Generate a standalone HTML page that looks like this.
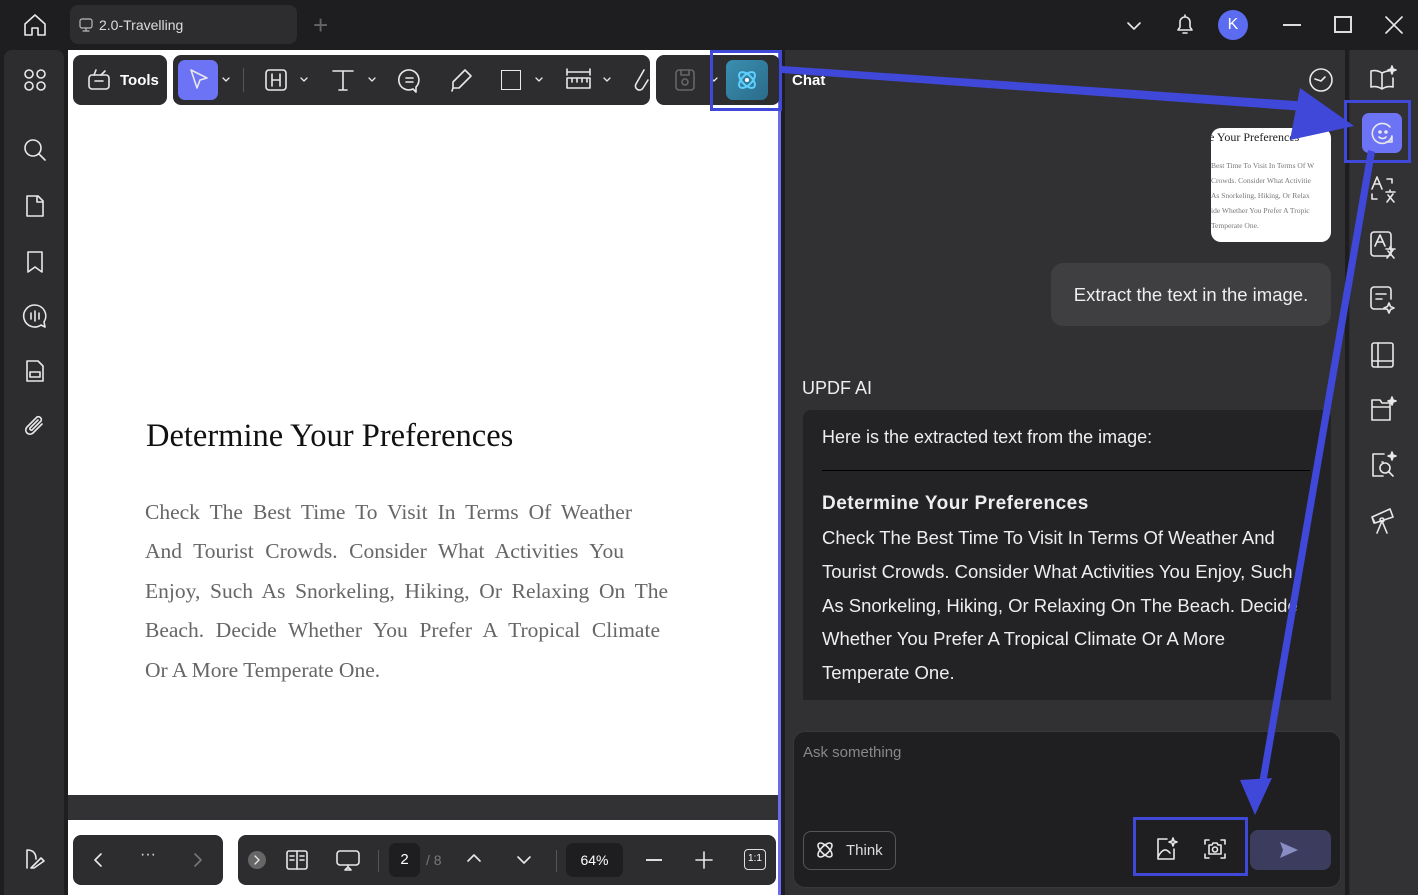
<!DOCTYPE html>
<html><head><meta charset="utf-8"><style>
*{box-sizing:border-box;margin:0;padding:0}
body{width:1418px;height:895px;background:#1e1e20;font-family:"Liberation Sans",sans-serif;position:relative;overflow:hidden;color:#fff}
.abs{position:absolute}
.ic{position:absolute;fill:none;stroke:#e8e8e8;stroke-width:1.6;stroke-linecap:round;stroke-linejoin:round}
.grp{position:absolute;background:#2d2d30;border-radius:8px}
.serif{font-family:"Liberation Serif",serif}
.pl{position:absolute;left:145px;font-size:21.5px;color:#666;white-space:nowrap;text-align:justify;text-align-last:justify;font-family:"Liberation Serif",serif;height:30px;line-height:30px}
</style></head><body>
<!-- title bar -->
<svg class="ic" style="left:22px;top:12px" width="26" height="26" viewBox="0 0 26 26"><path d="M3 12L13 3l10 9v11H16v-7h-6v7H3z"/></svg>
<div class="abs" style="left:70px;top:5px;width:227px;height:39px;background:#2d2d30;border-radius:8px"></div>
<svg class="ic" style="left:79px;top:18px;stroke:#bbb;stroke-width:1.2" width="14" height="14" viewBox="0 0 14 14"><rect x="1" y="1" width="12" height="9" rx="2"/><path d="M7 10v3M4 13h6"/></svg>
<div class="abs" style="left:99px;top:17px;font-size:14px;color:#ddd">2.0-Travelling</div>
<div class="abs" style="left:313px;top:10px;font-size:26px;color:#666;font-weight:300">+</div>
<svg class="ic" style="left:1124px;top:16px" width="20" height="20" viewBox="0 0 20 20"><path d="M4 7l6 6 6-6"/></svg>
<svg class="ic" style="left:1172px;top:12px" width="26" height="26" viewBox="0 0 26 26"><path d="M6 18h14l-2-3v-5a5 5 0 0 0-10 0v5zM11 21h4M13 3v2"/></svg>
<div class="abs" style="left:1218px;top:10px;width:30px;height:30px;border-radius:50%;background:#5b6cf0;text-align:center;line-height:30px;font-size:16px">K</div>
<div class="abs" style="left:1283px;top:24px;width:18px;height:2px;background:#ddd"></div>
<div class="abs" style="left:1334px;top:16px;width:18px;height:17px;border:2px solid #ddd"></div>
<svg class="ic" style="left:1384px;top:15px" width="20" height="20" viewBox="0 0 20 20"><path d="M2 2l16 16M18 2L2 18"/></svg>

<!-- left sidebar -->
<div class="abs" style="left:4px;top:50px;width:60px;height:845px;background:#2d2d30;border-radius:8px 8px 0 0"></div>
<svg class="ic" style="left:22px;top:67px" width="26" height="26" viewBox="0 0 26 26"><circle cx="7" cy="7" r="4"/><circle cx="19" cy="7" r="4"/><circle cx="7" cy="19" r="4"/><circle cx="19" cy="19" r="4"/></svg>
<svg class="ic" style="left:22px;top:137px" width="26" height="26" viewBox="0 0 26 26"><circle cx="11" cy="11" r="8"/><path d="M17 17l6 6"/></svg>
<svg class="ic" style="left:22px;top:193px" width="26" height="26" viewBox="0 0 26 26"><path d="M5 3h11l5 5v15H5zM15 3v6h6"/></svg>
<svg class="ic" style="left:22px;top:249px" width="26" height="26" viewBox="0 0 26 26"><path d="M6 3h14v20l-7-5-7 5z"/></svg>
<svg class="ic" style="left:21px;top:302px" width="28" height="28" viewBox="0 0 28 28"><path d="M14 3a11 11 0 1 0 6 20l4 2-1-5A11 11 0 0 0 14 3zM10 11v6M14 9v10M18 11v6"/></svg>
<svg class="ic" style="left:22px;top:358px" width="26" height="26" viewBox="0 0 26 26"><path d="M5 3h11l5 5v15H5zM8 14h10v5H8z"/></svg>
<svg class="ic" style="left:22px;top:413px" width="26" height="26" viewBox="0 0 26 26"><path d="M20 11l-9 9a4 4 0 0 1-6-6l10-10a3 3 0 0 1 4 4l-9 9a1.5 1.5 0 0 1-2-2l8-8"/></svg>
<svg class="ic" style="left:22px;top:846px" width="26" height="26" viewBox="0 0 26 26"><path d="M5 4v18M5 4c6 0 9 3 9 9M9 22l10-10 3 3-10 7z"/></svg>

<!-- document -->
<div class="abs" style="left:68px;top:50px;width:712px;height:745px;background:#fff"></div>
<div class="abs" style="left:68px;top:795px;width:712px;height:25px;background:#323235"></div>
<div class="abs" style="left:68px;top:820px;width:712px;height:75px;background:#fff"></div>
<div class="abs" style="left:778px;top:50px;width:3px;height:845px;background:#6a6cf0"></div>
<div class="abs serif" style="left:146px;top:418px;font-size:32.5px;color:#111">Determine Your Preferences</div>
<div class="pl" style="top:497px;width:487px">Check The Best Time To Visit In Terms Of Weather</div>
<div class="pl" style="top:536px;width:479px">And Tourist Crowds. Consider What Activities You</div>
<div class="pl" style="top:576px;width:523px">Enjoy, Such As Snorkeling, Hiking, Or Relaxing On The</div>
<div class="pl" style="top:615px;width:515px">Beach. Decide Whether You Prefer A Tropical Climate</div>
<div class="pl" style="top:655px;text-align-last:left">Or A More Temperate One.</div>

<!-- toolbar -->
<div class="grp" style="left:73px;top:55px;width:94px;height:50px"></div>
<svg class="ic" style="left:86px;top:66px" width="26" height="26" viewBox="0 0 26 26"><rect x="3" y="9" width="20" height="14" rx="3"/><path d="M9 15h8M8 9l2-5M15 9l4-4"/></svg>
<div class="abs" style="left:120px;top:72px;font-size:15px;font-weight:bold">Tools</div>
<div class="grp" style="left:173px;top:55px;width:477px;height:50px"></div>
<div class="abs" style="left:178px;top:60px;width:40px;height:40px;background:#6d73f5;border-radius:7px"></div>
<svg class="ic" style="left:186px;top:67px" width="26" height="26" viewBox="0 0 26 26"><path d="M5 3l16 8-7 2-3 8z"/></svg>
<svg class="ic" style="left:220px;top:73px;stroke-width:1.3" width="12" height="12" viewBox="0 0 12 12"><path d="M3 5l3 3 3-3"/></svg>
<div class="abs" style="left:243px;top:68px;width:1px;height:24px;background:#555"></div>
<svg class="ic" style="left:263px;top:67px" width="26" height="26" viewBox="0 0 26 26"><rect x="3" y="3" width="20" height="20" rx="3"/><path d="M9 7v12M17 7v12M9 13h8"/></svg>
<svg class="ic" style="left:298px;top:73px;stroke-width:1.3" width="12" height="12" viewBox="0 0 12 12"><path d="M3 5l3 3 3-3"/></svg>
<svg class="ic" style="left:330px;top:67px" width="26" height="26" viewBox="0 0 26 26"><path d="M3 4h20M13 4v19M9 23h8"/></svg>
<svg class="ic" style="left:366px;top:73px;stroke-width:1.3" width="12" height="12" viewBox="0 0 12 12"><path d="M3 5l3 3 3-3"/></svg>
<svg class="ic" style="left:397px;top:67px" width="27" height="27" viewBox="0 0 27 27"><path d="M13 3a10 10 0 1 0 3 19l3 3v-5A10 10 0 0 0 13 3zM9 11h7M9 15h7"/></svg>
<svg class="ic" style="left:448px;top:67px" width="26" height="26" viewBox="0 0 26 26"><path d="M17 3l6 6-12 12H5v-6zM5 21l-1 3"/></svg>
<div class="abs" style="left:501px;top:70px;width:20px;height:20px;border:1.6px solid #e8e8e8"></div>
<svg class="ic" style="left:533px;top:73px;stroke-width:1.3" width="12" height="12" viewBox="0 0 12 12"><path d="M3 5l3 3 3-3"/></svg>
<svg class="ic" style="left:565px;top:66px" width="27" height="27" viewBox="0 0 27 27"><path d="M2 3v6M25 3v6M2 6h23M2 12h23v10H2zM7 12v4M12 12v4M17 12v4M22 12v4"/></svg>
<svg class="ic" style="left:601px;top:73px;stroke-width:1.3" width="12" height="12" viewBox="0 0 12 12"><path d="M3 5l3 3 3-3"/></svg>
<svg class="ic" style="left:632px;top:67px" width="18" height="28" viewBox="0 0 18 28"><path d="M12 3l-8 14a4 4 0 0 0 7 4l5-8"/></svg>
<div class="grp" style="left:656px;top:55px;width:124px;height:50px"></div>
<svg class="ic" style="left:673px;top:67px;stroke:#666" width="24" height="26" viewBox="0 0 24 26"><rect x="3" y="3" width="18" height="20" rx="3"/><circle cx="12" cy="15" r="3"/><path d="M8 3v5h8V3"/></svg>
<svg class="ic" style="left:708px;top:73px;stroke-width:1.3" width="12" height="12" viewBox="0 0 12 12"><path d="M3 5l3 3 3-3"/></svg>
<div class="abs" style="left:726px;top:60px;width:42px;height:40px;background:linear-gradient(135deg,#3a8fb0,#2b6b8a);border-radius:7px"></div>
<svg class="ic" style="left:733px;top:66px;stroke:#5dd0ff;stroke-width:2" width="28" height="28" viewBox="0 0 28 28"><ellipse cx="14" cy="14" rx="10" ry="5" transform="rotate(45 14 14)"/><ellipse cx="14" cy="14" rx="10" ry="5" transform="rotate(-45 14 14)"/><circle cx="14" cy="14" r="2" fill="#fff" stroke="none"/></svg>
<div class="abs" style="left:710px;top:50px;width:72px;height:61px;border:3px solid #3f48d8"></div>

<!-- bottom bars -->
<div class="grp" style="left:73px;top:835px;width:150px;height:50px"></div>
<svg class="ic" style="left:90px;top:851px" width="16" height="18" viewBox="0 0 16 18"><path d="M11 3L5 9l6 6"/></svg>
<div class="abs" style="left:140px;top:846px;font-size:16px;color:#ddd">···</div>
<svg class="ic" style="left:190px;top:851px;stroke:#777" width="16" height="18" viewBox="0 0 16 18"><path d="M5 3l6 6-6 6"/></svg>
<div class="grp" style="left:238px;top:835px;width:538px;height:50px"></div>
<div class="abs" style="left:248px;top:851px;width:18px;height:18px;border-radius:50%;background:#666"></div>
<svg class="ic" style="left:251px;top:854px;stroke-width:1.3" width="12" height="12" viewBox="0 0 12 12"><path d="M4 2l4 4-4 4"/></svg>
<svg class="ic" style="left:284px;top:847px" width="26" height="26" viewBox="0 0 26 26"><rect x="3" y="4" width="20" height="18" rx="2"/><path d="M13 4v18M6 9h4M6 13h4M16 9h4M16 13h4"/></svg>
<svg class="ic" style="left:335px;top:847px" width="26" height="26" viewBox="0 0 26 26"><rect x="2" y="4" width="22" height="14" rx="3"/><path d="M13 18v3M10 23h6l-3-3z"/></svg>
<div class="abs" style="left:378px;top:850px;width:1px;height:22px;background:#555"></div>
<div class="abs" style="left:389px;top:843px;width:31px;height:34px;background:#1e1e20;border-radius:7px;text-align:center;line-height:34px;font-size:15px">2</div>
<div class="abs" style="left:426px;top:852px;font-size:14px;color:#777">/ 8</div>
<svg class="ic" style="left:465px;top:851px" width="18" height="14" viewBox="0 0 18 14"><path d="M3 10l6-6 6 6"/></svg>
<svg class="ic" style="left:515px;top:853px" width="18" height="14" viewBox="0 0 18 14"><path d="M3 4l6 6 6-6"/></svg>
<div class="abs" style="left:556px;top:850px;width:1px;height:22px;background:#555"></div>
<div class="abs" style="left:566px;top:843px;width:57px;height:34px;background:#1e1e20;border-radius:7px;text-align:center;line-height:34px;font-size:14px">64%</div>
<div class="abs" style="left:646px;top:859px;width:16px;height:2px;background:#ddd"></div>
<svg class="ic" style="left:695px;top:851px" width="18" height="18" viewBox="0 0 18 18"><path d="M9 1v16M1 9h16"/></svg>
<div class="abs" style="left:744px;top:849px;width:22px;height:21px;border:1.5px solid #ddd;border-radius:4px;font-size:10px;text-align:center;line-height:18px">1:1</div>

<!-- chat panel -->
<div class="abs" style="left:785px;top:50px;width:560px;height:845px;background:#313134"></div>
<div class="abs" style="left:792px;top:72px;font-size:15px;font-weight:bold">Chat</div>
<svg class="ic" style="left:1307px;top:66px" width="28" height="28" viewBox="0 0 28 28"><circle cx="14" cy="14" r="11"/><path d="M8 13l6 2 4-4"/></svg>
<div class="abs" style="left:1211px;top:128px;width:120px;height:114px;background:#fff;border-radius:10px;overflow:hidden">
<div class="serif" style="position:absolute;left:-8px;top:2px;font-size:12px;color:#222;white-space:nowrap">ne Your Preferences</div>
<div class="serif" style="position:absolute;left:0;top:30px;font-size:7.5px;line-height:15px;color:#777;white-space:nowrap">Best Time To Visit In Terms Of W<br>Crowds. Consider What Activitie<br>As Snorkeling, Hiking, Or Relax<br>ide Whether You Prefer A Tropic<br>Temperate One.</div></div>
<div class="abs" style="left:1051px;top:263px;width:280px;height:63px;background:#3f3f42;border-radius:12px;font-size:18.5px;line-height:63px;text-align:center;color:#eee">Extract the text in the image.</div>
<div class="abs" style="left:802px;top:378px;font-size:18px;color:#eee">UPDF AI</div>
<div class="abs" style="left:803px;top:410px;width:528px;height:290px;background:#232326;border-radius:8px 8px 0 0"></div>
<div class="abs" style="left:822px;top:427px;font-size:18px;color:#eee">Here is the extracted text from the image:</div>
<div class="abs" style="left:822px;top:470px;width:488px;height:1px;background:#000"></div>
<div class="abs" style="left:822px;top:493px;font-size:19px;font-weight:bold;color:#eee;letter-spacing:0.5px">Determine Your Preferences</div>
<div class="abs" style="left:822px;top:521px;width:490px;font-size:18.5px;line-height:33.8px;color:#eee">Check The Best Time To Visit In Terms Of Weather And Tourist Crowds. Consider What Activities You Enjoy, Such As Snorkeling, Hiking, Or Relaxing On The Beach. Decide Whether You Prefer A Tropical Climate Or A More Temperate One.</div>
<div class="abs" style="left:793px;top:731px;width:548px;height:157px;background:#1f1f22;border-radius:12px;border:1px solid #38383b"></div>
<div class="abs" style="left:803px;top:744px;font-size:15px;color:#888">Ask something</div>
<div class="abs" style="left:803px;top:831px;width:93px;height:39px;border:1px solid #555;border-radius:8px"></div>
<svg class="ic" style="left:814px;top:839px" width="22" height="22" viewBox="0 0 22 22"><ellipse cx="11" cy="11" rx="9" ry="4" transform="rotate(45 11 11)"/><ellipse cx="11" cy="11" rx="9" ry="4" transform="rotate(-45 11 11)"/></svg>
<div class="abs" style="left:846px;top:842px;font-size:15px;color:#ddd">Think</div>
<svg class="ic" style="left:1153px;top:836px" width="26" height="26" viewBox="0 0 26 26"><path d="M14 3H5v20h16v-10M5 21c4-8 8-9 12-4M20 2l1 3 3 1-3 1-1 3-1-3-3-1 3-1z"/></svg>
<svg class="ic" style="left:1202px;top:836px" width="26" height="26" viewBox="0 0 26 26"><path d="M3 8V4h4M19 4h4v4M23 18v4h-4M7 22H3v-4M7 9h3l1-2h4l1 2h3v9H7z"/><circle cx="13" cy="13.5" r="2.5"/></svg>
<div class="abs" style="left:1133px;top:817px;width:115px;height:59px;border:3px solid #3f48d8"></div>
<div class="abs" style="left:1250px;top:830px;width:81px;height:40px;background:#3c3d5e;border-radius:8px"></div>
<svg class="abs" style="left:1279px;top:841px" width="20" height="18" viewBox="0 0 20 18"><path d="M1 1l18 8-18 8 3-8z" fill="#8a8cc4"/></svg>

<!-- right icon bar -->
<div class="abs" style="left:1349px;top:50px;width:1px;height:845px;background:#2a2a2d"></div>
<div class="abs" style="left:1350px;top:50px;width:68px;height:845px;background:#323235"></div>
<svg class="ic" style="left:1368px;top:64px" width="30" height="30" viewBox="0 0 30 30"><path d="M3 7c4-1 8 0 11 2v16c-3-2-7-3-11-2zM14 9c2-1 4-2 7-2M14 25c3-2 7-3 11-2V14"/><path d="M24 2l1 3 3 1-3 1-1 3-1-3-3-1 3-1z" fill="#e8e8e8"/></svg>
<div class="abs" style="left:1362px;top:113px;width:40px;height:40px;background:#6d73f5;border-radius:7px"></div>
<svg class="ic" style="left:1368px;top:118px" width="30" height="30" viewBox="0 0 30 30"><path d="M22 9a10 10 0 1 0 2 9v6h-6"/><circle cx="12" cy="14" r="1" fill="#e8e8e8"/><circle cx="18" cy="14" r="1" fill="#e8e8e8"/><path d="M11 19c2 2 5 2 7 0"/></svg>
<div class="abs" style="left:1344px;top:100px;width:67px;height:63px;border:3px solid #3f48d8"></div>
<svg class="ic" style="left:1369px;top:175px" width="28" height="30" viewBox="0 0 28 30"><path d="M3 14l5-12 5 12M5 9h6M18 4h5v4M3 19v5h5M17 17h9M21 15v2M18 27l6-8M19 20l6 7"/></svg>
<svg class="ic" style="left:1369px;top:230px" width="28" height="30" viewBox="0 0 28 30"><rect x="2" y="2" width="20" height="24" rx="3"/><path d="M6 16l5-11 5 11M8 12h6M17 19h9M21 17v2M18 28l6-8M19 21l6 7"/></svg>
<svg class="ic" style="left:1369px;top:285px" width="28" height="30" viewBox="0 0 28 30"><path d="M18 24H5a3 3 0 0 1-3-3V5a3 3 0 0 1 3-3h14a3 3 0 0 1 3 3v9M7 9h10M7 14h6M20 18l1.5 3.5L25 23l-3.5 1.5L20 28l-1.5-3.5L15 23l3.5-1.5z"/></svg>
<svg class="ic" style="left:1369px;top:340px" width="28" height="30" viewBox="0 0 28 30"><rect x="3" y="3" width="21" height="24" rx="2"/><path d="M9 3v24M3 21h21"/></svg>
<svg class="ic" style="left:1369px;top:395px" width="28" height="30" viewBox="0 0 28 30"><path d="M3 5h8l2 3h8v17H3zM3 12h18"/><path d="M23 2l1 3 3 1-3 1-1 3-1-3-3-1 3-1z" fill="#e8e8e8"/></svg>
<svg class="ic" style="left:1369px;top:450px" width="28" height="30" viewBox="0 0 28 30"><path d="M15 4H4v22h10M13 12l1 0"/><circle cx="16" cy="18" r="5"/><path d="M20 22l4 4"/><path d="M23 2l1 3 3 1-3 1-1 3-1-3-3-1 3-1z" fill="#e8e8e8"/></svg>
<svg class="ic" style="left:1369px;top:505px" width="28" height="30" viewBox="0 0 28 30"><path d="M3 12l18-8 3 8-18 6zM5 18l-2-6M13 16l-5 12M13 16l5 12M13 16v0"/><circle cx="13" cy="15" r="2"/></svg>

<!-- arrows overlay -->
<svg class="abs" style="left:0;top:0" width="1418" height="895" viewBox="0 0 1418 895">
<g fill="#3f48d8">
<polygon points="782,66 1310,102 1305,111 782,73"/>
<polygon points="1300,88 1354,126 1290,140"/>
<polygon points="1368,150 1375,152 1265,790 1258,789"/>
<polygon points="1240,780 1272,778 1255,815"/>
</g></svg>
</body></html>
